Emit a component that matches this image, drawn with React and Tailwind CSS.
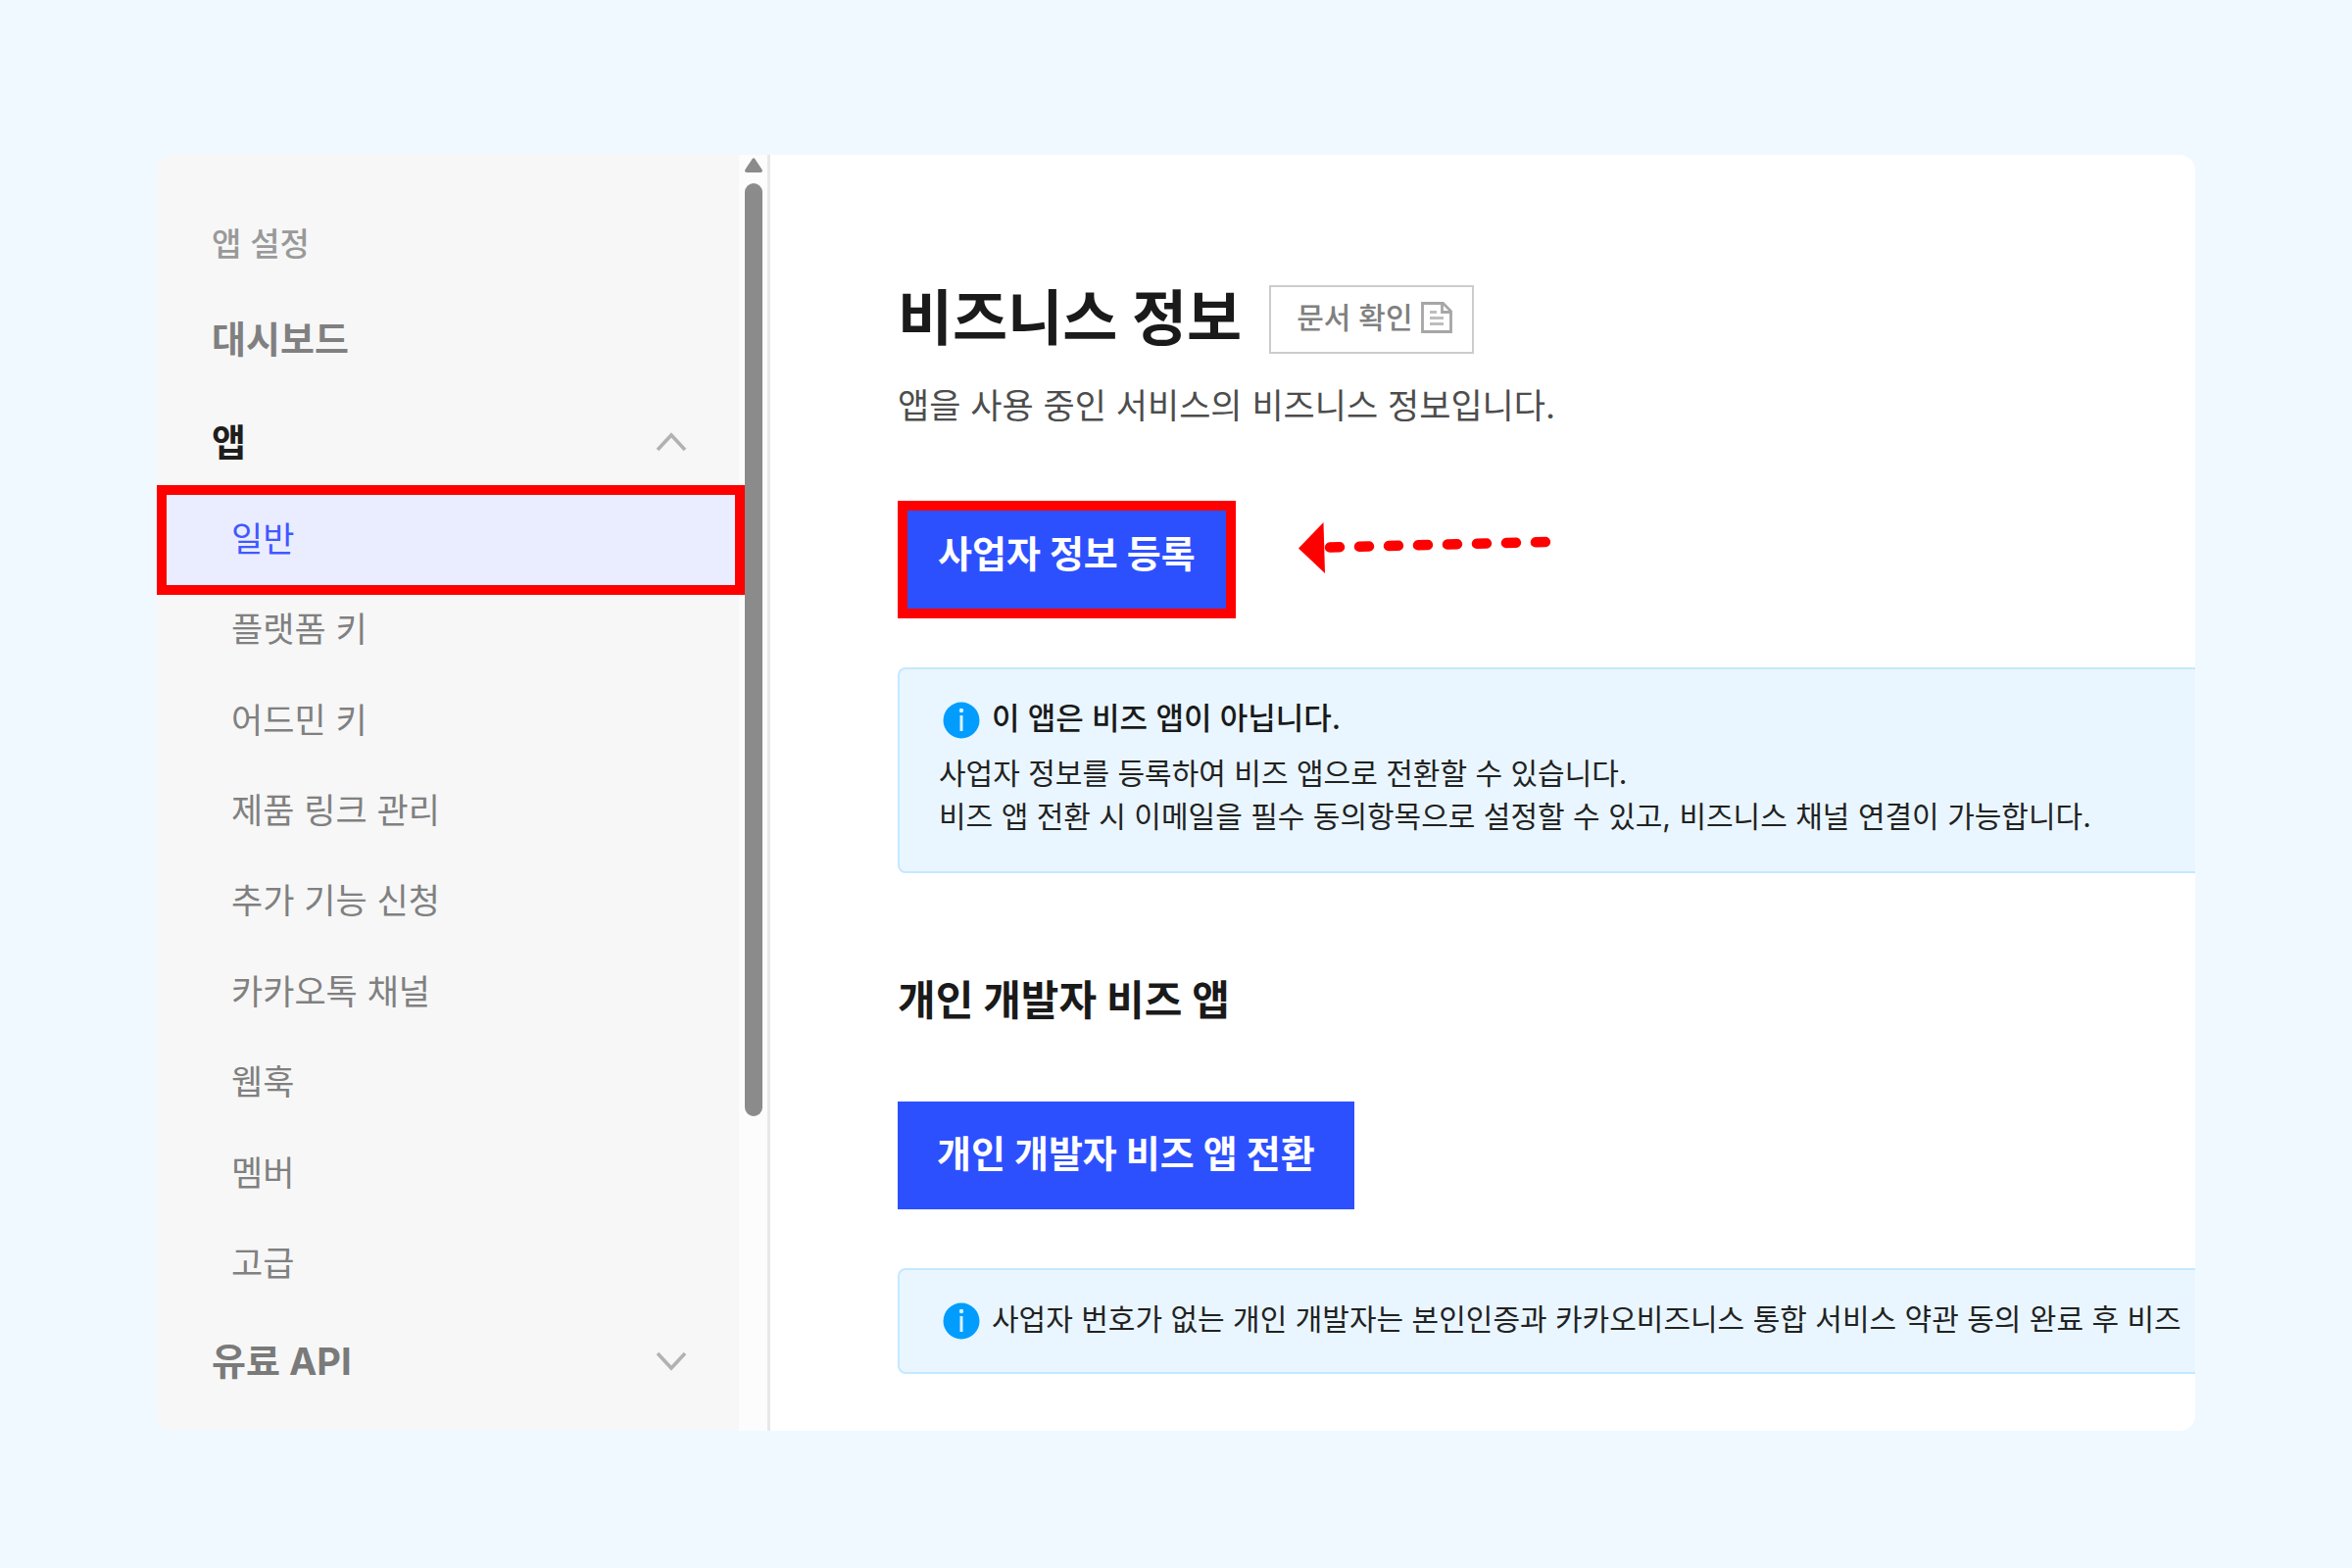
const items = ['일반', '플랫폼 키', '어드민 키', '제품 링크 관리', '추가 기능 신청', '카카오톡 채널', '웹훅', '멤버', '고급'];

function Chevron({ up }) {
  return (
    <svg viewBox="0 0 32 20" className="h-5 w-8" fill="none" stroke="#b2b2b2" strokeWidth="3.6" aria-hidden="true">
      <path d={up ? 'M2 18 16 3 30 18' : 'M2 2 16 17 30 2'} />
    </svg>
  );
}

function InfoIcon() {
  return (
    <svg viewBox="0 0 38 38" className="size-[38px] shrink-0" aria-hidden="true">
      <circle cx="19" cy="19" r="18.5" fill="#009dff" />
      <circle cx="19" cy="9" r="2.2" fill="#d9f0ff" />
      <path d="M19 14v16" stroke="#d9f0ff" strokeWidth="3" />
    </svg>
  );
}

function Sidebar() {
  return (
    <aside className="flex w-[626px] shrink-0 border-r-3 border-[#e8e8e8] bg-[#fcfcfc]">
      <nav aria-label="앱 설정" className="w-[594px] shrink-0 bg-[#f7f7f7]">
        <p className="mt-[66px] px-14 text-[33px] leading-[50px] font-medium text-[#999]">앱 설정</p>
        <a href="#dashboard" className="mt-[46px] block px-14 text-[38px] leading-[52px] font-bold text-[#808080]">대시보드</a>
        <button type="button" aria-expanded="true" className="mt-[53px] flex w-full items-center justify-between pr-[53px] pl-14 text-[38px] leading-[52px] font-bold text-[#1e1e1e]">
          앱
          <Chevron up />
        </button>
        <ul className="mt-[28px] grid h-[832px] auto-rows-fr">
          {items.map((label, i) => (
            <li key={label} className="grid">
              {i === 0 ? (
                <a href="#item" aria-current="page" className="relative flex items-center bg-[#eaedff] pb-[2px] pl-[76px] text-[35px] leading-none text-[#4158ff]">
                  {label}
                  <span className="absolute -inset-y-[10px] right-[-6px] left-0 z-10 border-10 border-[#f00]" />
                </a>
              ) : (
                <a href="#item" className="flex items-center pb-[2px] pl-[76px] text-[35px] leading-none text-[#808080]">{label}</a>
              )}
            </li>
          ))}
        </ul>
        <button type="button" aria-expanded="false" className="mt-[26px] flex w-full items-center justify-between pr-[53px] pl-14 text-[38px] leading-[52px] font-bold text-[#7a7a7a]">
          유료 API
          <Chevron />
        </button>
      </nav>
      <div className="flex flex-1 flex-col items-center pt-[3px]" aria-hidden="true">
        <svg viewBox="0 0 18 15" className="h-[15px] w-[18px]" fill="#8b8b8b">
          <path d="M7.600 1.200q1.400-2 2.800 0l7 10.500q1.600 3.300-1.400 3.300h-14q-3 0-1.400-3.300z" />
        </svg>
        <div className="mt-[11px] h-[952px] w-[18px] rounded-full bg-[#8b8b8b]" />
      </div>
    </aside>
  );
}

export default function App() {
  return (
    <div className="min-h-screen bg-[#f0f9ff] px-40 pt-[158px] pb-[139px] font-[Inter,'Noto_Sans_CJK_KR',sans-serif]">
      <div className="flex overflow-hidden rounded-2xl bg-white">
        <Sidebar />
        <main className="min-w-0 flex-1 overflow-hidden pb-[58px] pl-[130px] text-[#1a1a1a]">
          <header className="mt-[122px] flex items-center gap-7">
            <h1 className="text-[61px] leading-[90px] font-bold">비즈니스 정보</h1>
            <a href="#docs" className="mt-[2px] flex h-[70px] items-center gap-2 border-2 border-[#ccc] pr-5 pb-1 pl-[26px] text-[30px] leading-none font-medium text-[#808080]">
              문서 확인
              <svg viewBox="0 0 32 32" className="size-8" fill="none" stroke="#a6a6a6" strokeWidth="2.8" aria-hidden="true">
                <path d="M1.500 1.500H22.500L30.500 9.500V30.500H1.500z" />
                <path d="M21.500 2v8.500h8.500" />
                <path d="M9 10.500h7M9 16.500h14M9 22.500h14" stroke="#bdbdbd" />
              </svg>
            </a>
          </header>
          <p className="mt-[18px] text-[35px] leading-[52px] text-[#4d4d4d]">앱을 사용 중인 서비스의 비즈니스 정보입니다.</p>
          <div className="mt-[71px] flex items-start">
            <button type="button" className="h-[120px] border-10 border-[#f00] bg-[#2d50ff] px-[31px] pb-3 text-[38px] leading-none font-bold text-white">사업자 정보 등록</button>
            <svg viewBox="0 0 258 52" className="mt-[22px] ml-[64px] h-[52px] w-[258px]" fill="#f00" aria-hidden="true">
              <path d="M0 26.500 25.500 0 27 52z" />
              <path d="M32 25.500 252 20" stroke="#f00" strokeWidth="10.500" strokeLinecap="round" strokeDasharray="10 20" />
            </svg>
          </div>
          <section className="mt-[50px] -mr-2 rounded-lg border-2 border-[#c5e8ff] bg-[#e9f6ff] py-6 pl-10">
            <h2 className="flex items-center gap-3 pl-1 text-[31px] leading-[52px] font-medium"><InfoIcon /><span className="pb-1">이 앱은 비즈 앱이 아닙니다.</span></h2>
            <p className="mt-1 pb-[10px] text-[30px] leading-[44px] whitespace-nowrap text-[#222]">
              사업자 정보를 등록하여 비즈 앱으로 전환할 수 있습니다.<br />
              비즈 앱 전환 시 이메일을 필수 동의항목으로 설정할 수 있고, 비즈니스 채널 연결이 가능합니다.
            </p>
          </section>
          <h2 className="mt-[100px] text-[42px] leading-[60px] font-bold">개인 개발자 비즈 앱</h2>
          <button type="button" className="mt-[73px] block h-[110px] bg-[#2d50ff] px-10 pb-1 text-[38px] leading-none font-bold text-white">개인 개발자 비즈 앱 전환</button>
          <section className="mt-[60px] -mr-2 rounded-lg border-2 border-[#c5e8ff] bg-[#e9f6ff] py-6 pl-10">
            <p className="flex items-center gap-3 pl-1 text-[30px] leading-[52px] whitespace-nowrap text-[#222]"><InfoIcon /><span className="pb-1">사업자 번호가 없는 개인 개발자는 본인인증과 카카오비즈니스 통합 서비스 약관 동의 완료 후 비즈</span></p>
          </section>
        </main>
      </div>
    </div>
  );
}
